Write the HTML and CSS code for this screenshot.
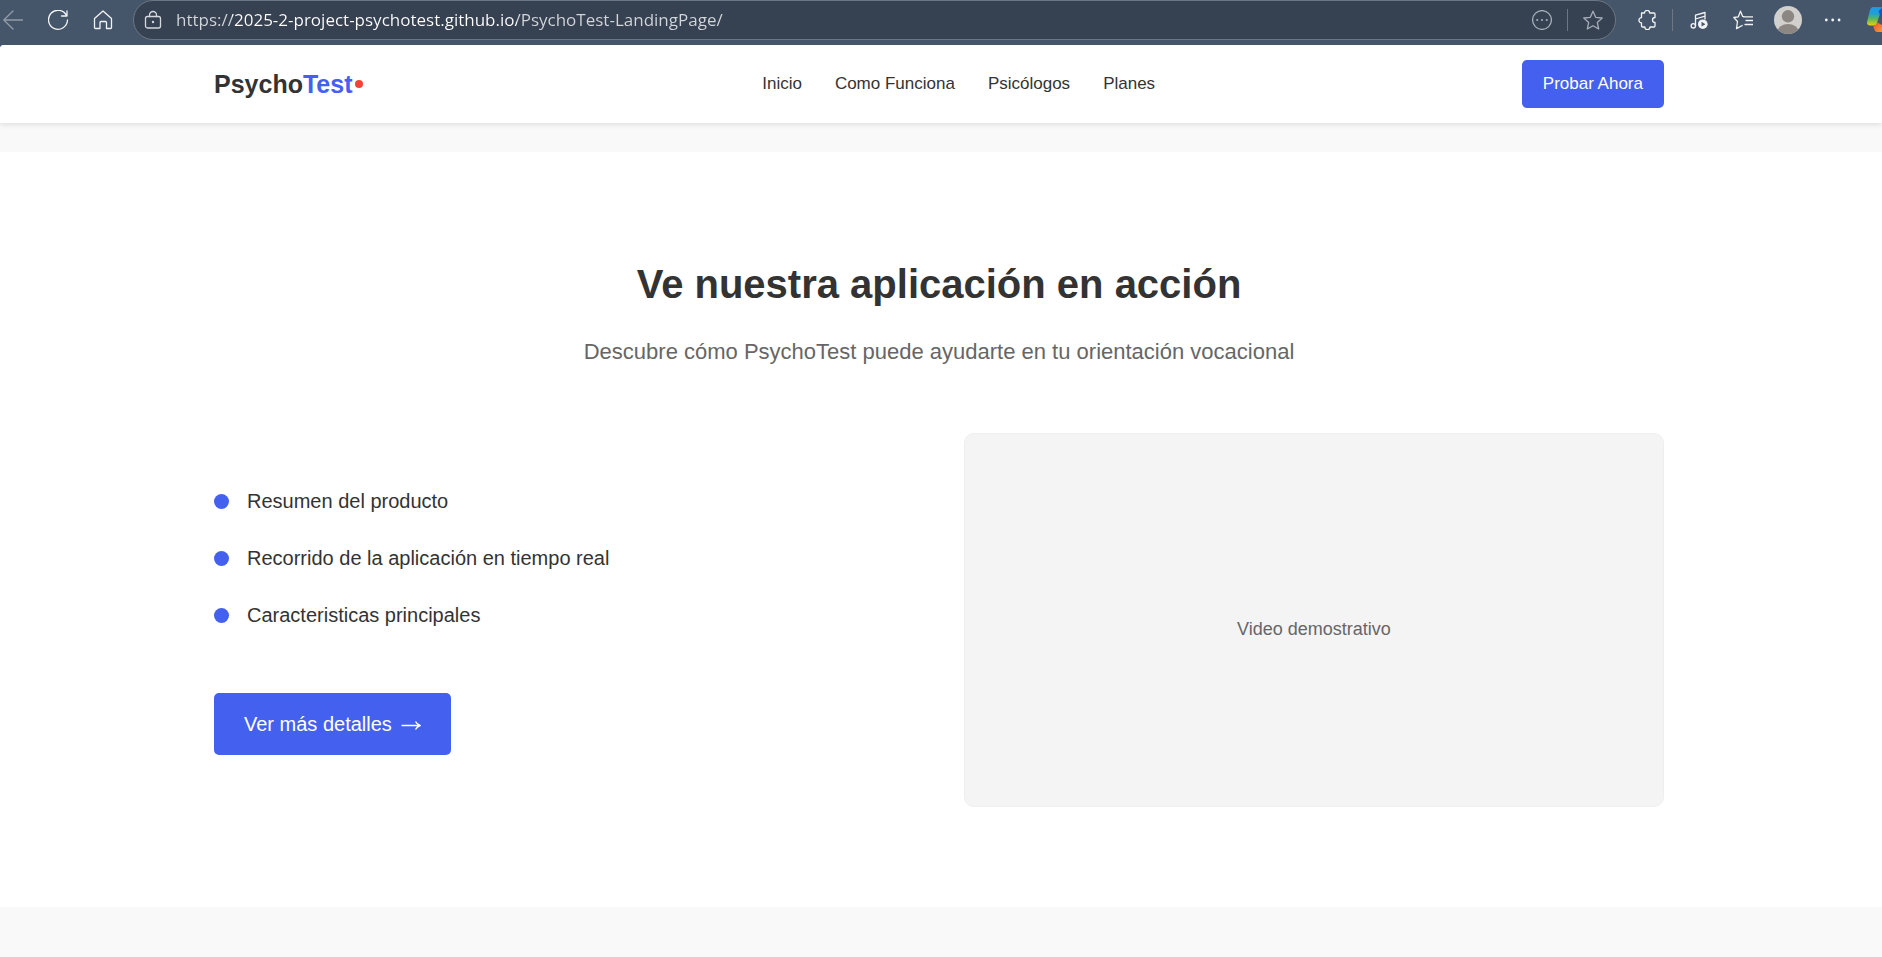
FILE: index.html
```html
<!DOCTYPE html>
<html lang="es">
<head>
<meta charset="utf-8">
<meta name="viewport" content="width=device-width, initial-scale=1">
<title>PsychoTest</title>
<link rel="stylesheet" href="styles.css">
</head>
<body>
<div class="toolbar">
  <div class="tools tools-left">
    <button class="tool tool-dim" aria-label="Atrás"><svg viewBox="0 0 20 20"><path d="M20 10H.8M10 1 .8 10l9.200 9"/></svg></button>
    <button class="tool" aria-label="Actualizar"><svg viewBox="0 0 20 20"><path d="M18.500 5.500A9.500 9.500 0 1 0 19.500 10M19 .8v5.200h-5.500"/></svg></button>
    <button class="tool" aria-label="Inicio del navegador"><svg viewBox="0 0 20 20"><path d="M1.500 8.500 10 .9l8.500 7.600V17.500q0 1-1 1H13.500V12.500q0-1-1-1h-4.500q-1 0-1 1v6H2.500q-1 0-1-1z"/></svg></button>
  </div>
  <div class="address">
    <svg class="lock" viewBox="0 0 20 20"><rect x="2.500" y="6.500" width="15" height="11.500" rx="2"/><path d="M6.500 6.500V5a3.500 3.500 0 0 1 7 0v1.500"/><circle class="fill" cx="10" cy="12" r="1.200"/></svg>
    <input class="url" type="text" aria-label="Dirección" value="https://2025-2-project-psychotest.github.io/PsychoTest-LandingPage/">
    <button class="tool tool-soft" aria-label="Más acciones"><svg viewBox="0 0 20 20"><circle cx="10" cy="10" r="9.400"/><g class="fill"><circle cx="5.200" cy="10" r="1.100"/><circle cx="10" cy="10" r="1.100"/><circle cx="14.800" cy="10" r="1.100"/></g></svg></button>
    <span class="divider"></span>
    <button class="tool tool-soft" aria-label="Agregar a favoritos"><svg viewBox="0 0 20 20"><path d="M10 1.200 12.700 7.300 19.200 8 14.300 12.400 15.700 19 10 15.700 4.300 19 5.700 12.400.8 8l6.500-.7z"/></svg></button>
  </div>
  <div class="tools tools-right">
    <button class="tool" aria-label="Extensiones"><svg viewBox="0 0 20 20"><path d="M4.500 3H7.500a2.600 2.600 0 0 1 5.200 0H17q1 0 1 1V7.500a2.500 2.500 0 0 0 0 5V16q0 1-1 1H13a2.600 2.600 0 0 1-5.200 0H5.500q-1 0-1-1V12.800a2.600 2.600 0 0 1 0-5.200z"/></svg></button>
    <span class="divider"></span>
    <button class="tool tool-music" aria-label="Multimedia"><svg viewBox="0 0 20 20"><path d="M6.500 16V5.200L16 2.500V9M6.500 9 16 6.200"/><circle cx="4.300" cy="15.800" r="2.200"/><circle class="fill" cx="13.800" cy="14.200" r="4.800"/><path class="play" d="M12.500 11.800v4.800l3.900-2.400z"/></svg></button>
    <button class="tool tool-list" aria-label="Favoritos"><svg viewBox="0 0 20 20"><path d="M11.500 6.800 9.700 6.400 7.500 1.200 5.200 6.900.8 7.500 4.500 11.500 3.500 18.600 9.200 15.500M10.500 6.800H20M13 10.500h7M12 14.500h8"/></svg></button>
    <button class="tool avatar" aria-label="Perfil"><svg viewBox="0 0 28 28"><clipPath id="face"><circle cx="14" cy="14" r="14"/></clipPath><g clip-path="url(#face)"><rect class="avatar-bg" width="28" height="28"/><circle class="avatar-fg" cx="14" cy="10.300" r="6.200"/><ellipse class="avatar-fg" cx="14" cy="25.500" rx="10.500" ry="7.500"/></g></svg></button>
    <button class="tool tool-more" aria-label="Configuración"><svg viewBox="0 0 20 20"><g class="fill"><circle cx="4.300" cy="10" r="1.400"/><circle cx="10.700" cy="10" r="1.400"/><circle cx="17.100" cy="10" r="1.400"/></g></svg></button>
    <button class="tool copilot" aria-label="Copilot"><svg viewBox="0 0 15 26"><defs><linearGradient id="cool" x1="0" y1="0" x2="0" y2="1"><stop offset="0" stop-color="#1a9be8"/><stop offset=".35" stop-color="#1f9fd8"/><stop offset=".65" stop-color="#5cb85a"/><stop offset="1" stop-color="#f2cf0c"/></linearGradient><linearGradient id="warm" x1="0" y1="0" x2="1" y2="1"><stop offset="0" stop-color="#f0502e"/><stop offset="1" stop-color="#f79a35"/></linearGradient></defs><path fill="url(#cool)" d="M6 0H15L10 16Q9 18.500 6.500 18.500H3Q-.8 18.500.3 14L3 3Q4 0 6 0z"/><path fill="url(#warm)" d="M6 18.500Q9 18.500 10.500 15.500L15 18V25H10.500Q8 25 7.300 22.500z"/><path fill="#1556c0" d="M11.500 4 15 1V13z"/></svg></button>
  </div>
</div>

<div class="page">
  <header class="header">
    <div class="container header-row">
      <a class="logo" href="#">Psycho<span class="logo-accent">Test</span><span class="logo-dot"></span></a>
      <nav class="nav">
        <a href="#">Inicio</a>
        <a href="#">Como Funciona</a>
        <a href="#">Psicólogos</a>
        <a href="#">Planes</a>
      </nav>
      <button class="btn btn-small">Probar Ahora</button>
    </div>
  </header>

  <main class="demo">
    <div class="container">
      <h2 class="title">Ve nuestra aplicación en acción</h2>
      <p class="subtitle">Descubre cómo PsychoTest puede ayudarte en tu orientación vocacional</p>
      <div class="columns">
        <div class="info">
          <ul class="features">
            <li>Resumen del producto</li>
            <li>Recorrido de la aplicación en tiempo real</li>
            <li>Caracteristicas principales</li>
          </ul>
          <button class="btn btn-large">Ver más detalles
            <svg class="arrow" viewBox="0 0 20 20"><path d="M.5 11.500H19M14.500 7.500q1.500 2.800 4.500 4-3 1.200-4.500 4"/></svg>
          </button>
        </div>
        <div class="video">Video demostrativo</div>
      </div>
    </div>
  </main>
</div>
</body>
</html>
```
FILE: styles.css
```css
* {
  box-sizing: border-box;
}

body {
  margin: 0;
  background: #45556a;
  color: #333;
  font-family: "Liberation Sans", Arial, sans-serif;
  overflow-x: hidden;
}

button {
  border: 0;
  font-family: inherit;
  cursor: pointer;
}

/* Browser toolbar */
.toolbar {
  display: flex;
  height: 45px;
  padding-left: 3px;
  background: #45556a;
  overflow: hidden;
}

.tools,
.address {
  display: flex;
  align-items: center;
  height: 40px;
}

.tools-left {
  gap: 25px;
  margin-right: 20px;
}

.tools-right {
  margin-left: 21px;
}

.tool {
  flex: none;
  width: 20px;
  height: 20px;
  padding: 0;
  background: none;
  color: #f1f3f5;
}

.tool svg,
.lock {
  display: block;
  width: 100%;
  height: 100%;
  fill: none;
  stroke: currentColor;
  stroke-width: 1.3;
  stroke-linejoin: round;
  stroke-linecap: round;
}

.toolbar .fill {
  fill: currentColor;
  stroke: none;
}

.tool-dim {
  color: #929ca8;
}

.tool-soft {
  color: #a5adb8;
}

.address {
  flex: 1;
  min-width: 0;
  padding: 0 12px 0 9px;
  border: 1px solid #6c7684;
  border-radius: 20px;
  background: #364152;
}

.lock {
  flex: none;
  width: 20px;
  height: 20px;
  color: #d5d9de;
}

.url {
  flex: 1;
  min-width: 0;
  margin: 0 16px 0 13px;
  padding: 0;
  border: 0;
  outline: 0;
  background: linear-gradient(90deg, #d3d7db 56px, #fff 56px 341px, #d3d7db 341px);
  background-clip: text;
  -webkit-background-clip: text;
  color: #fff;
  -webkit-text-fill-color: transparent;
  font: 17px/24px "Open Sans", "Noto Sans", sans-serif;
}

.divider {
  flex: none;
  width: 1px;
  height: 22px;
  margin: 0 15px;
  background: #6c7684;
}

.tool-music {
  margin-left: 1px;
}

.tool-list {
  margin-left: 24px;
}

.play {
  fill: #45556a;
  stroke: none;
}

.avatar {
  width: 28px;
  height: 28px;
  margin: 0 20px 0 21px;
}

.avatar svg,
.copilot svg {
  stroke: none;
}

.avatar-bg {
  fill: #d2d0ce;
}

.avatar-fg {
  fill: #8d8783;
}

.copilot {
  width: 15px;
  height: 26px;
  margin-left: 25px;
}

/* Landing page */
.page {
  min-height: calc(100vh - 45px);
  border-top-left-radius: 4px;
  background: #f9f9f9;
  overflow: hidden;
}

.header,
.demo {
  padding-right: 4px;
  background: #fff;
}

.header {
  box-shadow: 0 2px 5px rgba(0, 0, 0, 0.1);
}

.container {
  max-width: 1450px;
  margin: 0 auto;
}

.header-row {
  display: flex;
  align-items: center;
  justify-content: space-between;
  padding: 15px 0;
}

.logo {
  display: flex;
  align-items: center;
  color: #333;
  font-size: 25px;
  font-weight: 700;
  line-height: 40px;
  text-decoration: none;
}

.logo-accent {
  color: #4361ee;
}

.logo-dot {
  width: 8px;
  height: 8px;
  margin-left: 2px;
  border-radius: 50%;
  background: #f44336;
}

.nav {
  display: flex;
}

.nav a {
  margin-left: 33px;
  color: #333;
  font-size: 17px;
  line-height: 30px;
  text-decoration: none;
}

.btn {
  border-radius: 5px;
  background: #4361ee;
  color: #fff;
}

.btn-small {
  padding: 10px 21px;
  font-size: 17px;
  line-height: 28px;
}

.demo {
  margin-top: 29px;
  padding-top: 100px;
  padding-bottom: 100px;
}

.title,
.subtitle {
  margin: 0;
  text-align: center;
}

.title {
  margin-bottom: 18px;
  font-size: 40px;
  line-height: 64px;
}

.subtitle {
  margin-bottom: 63px;
  color: #666;
  font-size: 22px;
  line-height: 36px;
}

.columns {
  display: grid;
  grid-template-columns: 1fr 1fr;
  gap: 50px;
  align-items: center;
}

.features {
  display: grid;
  gap: 25px;
  margin: 0 0 62px;
  padding: 0;
  list-style: none;
  font-size: 20px;
  line-height: 32px;
}

.features li {
  display: flex;
  align-items: center;
  gap: 18px;
}

.features li::before {
  content: "";
  width: 15px;
  height: 15px;
  border-radius: 50%;
  background: #4361ee;
}

.btn-large {
  display: flex;
  align-items: center;
  gap: 9px;
  padding: 15px 30px;
  font-size: 20px;
  line-height: 32px;
}

.arrow {
  width: 20px;
  height: 20px;
  fill: none;
  stroke: currentColor;
  stroke-width: 1.4;
}

.video {
  display: flex;
  align-items: center;
  justify-content: center;
  min-height: 374px;
  padding-top: 18px;
  border: 1px solid #eee;
  border-radius: 10px;
  background: #f4f4f4;
  color: #666;
  font-size: 18px;
}
```
